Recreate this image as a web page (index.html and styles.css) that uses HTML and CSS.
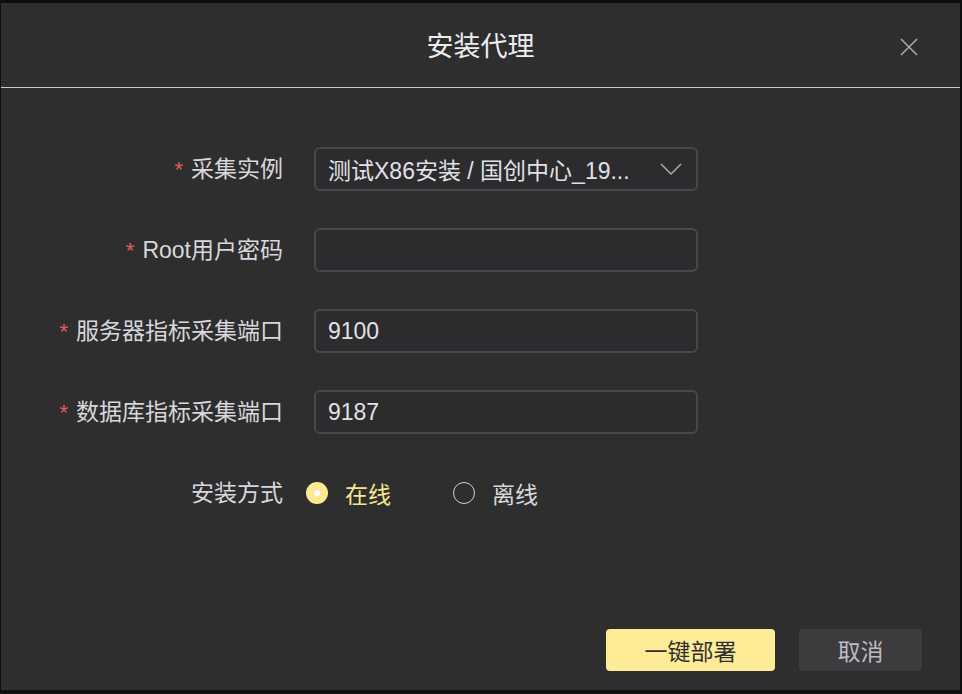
FILE: index.html
```html
<!DOCTYPE html>
<html lang="zh">
<head>
<meta charset="utf-8">
<link rel="stylesheet" href="styles.css">
</head>
<body>
<div class="dialog">
  <div class="header">
    <div class="title">安装代理</div>
    <button class="close" aria-label="close">
      <svg width="20" height="20" viewBox="0 0 20 20"><path d="M2 2L18 18M18 2L2 18" stroke="#a9a9ad" stroke-width="1.6" fill="none"/></svg>
    </button>
  </div>
  <div class="form">
    <div class="row">
      <div class="label"><span class="req">*</span>采集实例</div>
      <div class="field select">
        <span class="value">测试X86安装 / 国创中心_19...</span>
        <svg class="arrow" width="22" height="12" viewBox="0 0 22 12"><path d="M1 1L11 11L21 1" stroke="#a9a9ad" stroke-width="1.5" fill="none"/></svg>
      </div>
    </div>
    <div class="row">
      <div class="label"><span class="req">*</span>Root用户密码</div>
      <div class="field"></div>
    </div>
    <div class="row">
      <div class="label"><span class="req">*</span>服务器指标采集端口</div>
      <div class="field"><span class="value">9100</span></div>
    </div>
    <div class="row">
      <div class="label"><span class="req">*</span>数据库指标采集端口</div>
      <div class="field"><span class="value">9187</span></div>
    </div>
    <div class="row">
      <div class="label">安装方式</div>
      <div class="radios">
        <div class="radio checked"><span class="dot"></span><span>在线</span></div>
        <div class="radio"><span class="dot"></span><span>离线</span></div>
      </div>
    </div>
  </div>
  <div class="footer">
    <button class="btn primary">一键部署</button>
    <button class="btn cancel">取消</button>
  </div>
</div>
</body>
</html>
```
FILE: styles.css
```css
* { box-sizing: border-box; }
html, body { margin: 0; padding: 0; }
body {
  background: #0e0f0e;
  width: 962px;
  height: 694px;
  overflow: hidden;
  font-family: "Liberation Sans", "Noto Sans CJK SC", sans-serif;
}
.dialog {
  margin: 3px 2px 0 1px;
  width: 959px;
  height: 687px;
  background: #2f2e2f;
  display: flex;
  flex-direction: column;
}
.header {
  height: 85px;
  border-bottom: 1px solid #c9c9cb;
  display: flex;
  align-items: center;
  justify-content: center;
  position: relative;
}
.title {
  color: #ececf0;
  font-size: 27px;
  margin-top: -2px;
}
.close {
  position: absolute;
  right: 41px;
  top: 34px;
  background: none;
  border: 0;
  padding: 0;
  width: 20px;
  height: 20px;
}
.close svg { display: block; }
.form {
  padding-top: 59px;
  display: flex;
  flex-direction: column;
  gap: 37px;
}
.row {
  display: flex;
  align-items: center;
  height: 44px;
}
.label {
  width: 282px;
  text-align: right;
  color: #d7d7dc;
  font-size: 23px;
  margin-right: 31px;
  line-height: 1;
}
.req {
  color: #ea5a5a;
  margin-right: 8px;
  font-size: 22px;
}
.field {
  width: 384px;
  height: 44px;
  border: 2px solid #48474b;
  border-radius: 6px;
  background: #2c2b2d;
  display: flex;
  align-items: center;
  padding: 0 12px;
}
.value {
  color: #e1e1e5;
  font-size: 23px;
  white-space: nowrap;
}
.select .arrow { margin-left: auto; margin-right: 2px; }
.radios {
  display: flex;
  align-items: center;
  gap: 62px;
  margin-left: -8px;
}
.radio {
  display: flex;
  align-items: center;
  gap: 17px;
  color: #d7d7dc;
  font-size: 23px;
}
.radio .dot {
  width: 22px;
  height: 22px;
  border-radius: 50%;
  border: 1.5px solid #d0d0d4;
  display: inline-block;
}
.radio.checked { color: #f8e58a; }
.radio.checked .dot {
  border: 0;
  background: radial-gradient(circle, #ffffff 0 3px, #fde98f 3.6px);
}
.footer {
  margin-top: auto;
  margin-bottom: 19px;
  display: flex;
  justify-content: flex-end;
  gap: 24px;
  padding-right: 38px;
}
.btn {
  height: 42px;
  border: 0;
  border-radius: 4px;
  font-family: "Liberation Sans", "Noto Sans CJK SC", sans-serif;
  font-size: 23px;
}
.primary {
  width: 169px;
  background: #fdeb95;
  color: #2e2e30;
}
.cancel {
  width: 123px;
  background: #3c3b3d;
  color: #bdbdc2;
}
```
